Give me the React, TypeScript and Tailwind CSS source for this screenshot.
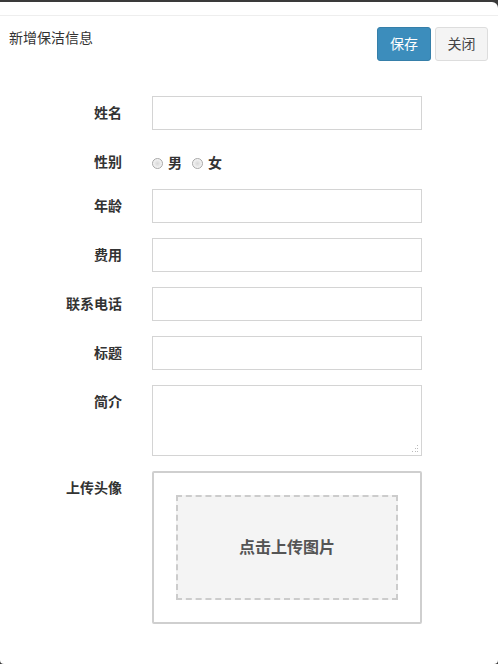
import React from "react"

const font = { fontFamily: '"Liberation Sans", "Noto Sans CJK SC", sans-serif' }

function Field({ label, children, align = "pt-[7px]" }: { label: string; children: React.ReactNode; align?: string }) {
  return (
    <div className="flex">
      <div className={`w-[122px] shrink-0 text-right text-[14px] font-bold text-[#333] ${align}`}>{label}</div>
      <div className="ml-[30px] w-[270px]">{children}</div>
    </div>
  )
}

function TextInput() {
  return <input type="text" className="block h-[34px] w-full border border-[#d4d4d4] bg-white px-3 text-[14px] outline-none" />
}

function Radio({ label }: { label: string }) {
  return (
    <label className="flex items-center gap-[5px]">
      <span className="h-[11px] w-[11px] rounded-full border border-[#a8a8a8] bg-[radial-gradient(circle,#d8d8d8_0%,#f4f4f4_70%)]" />
      <span className="text-[14px] font-bold text-[#333]">{label}</span>
    </label>
  )
}

export default function App() {
  return (
    <div className="h-[664px] w-[498px] bg-[#3a3a3a] pt-[2px]" style={font}>
      <div className="h-[662px] rounded-tr-[6px] rounded-b-[4px] bg-white">
        <div className="h-[14px] border-b border-[#eeeeee]" />

        <div className="flex items-start justify-between pl-[9px] pr-[10px] pt-[11px]">
          <div className="pt-[1px] text-[14px] text-[#333]">新增保洁信息</div>
          <div className="flex gap-[4px]">
            <button className="h-[34px] w-[54px] rounded-[3px] border border-[#367fa9] bg-[#3c8dbc] text-[14px] text-white">保存</button>
            <button className="h-[34px] w-[53px] rounded-[3px] border border-[#dddddd] bg-[#f4f4f4] text-[14px] text-[#444]">关闭</button>
          </div>
        </div>

        <div className="mt-[35px] flex flex-col gap-[15px]">
          <Field label="姓名"><TextInput /></Field>
          <Field label="性别" align="pt-[7px]">
            <div className="flex h-[29px] items-center gap-[10px] pt-[8px]">
              <Radio label="男" />
              <Radio label="女" />
            </div>
          </Field>
          <Field label="年龄"><TextInput /></Field>
          <Field label="费用"><TextInput /></Field>
          <Field label="联系电话"><TextInput /></Field>
          <Field label="标题"><TextInput /></Field>
          <Field label="简介">
            <div className="relative">
              <textarea className="block h-[71px] w-full resize-none border border-[#d4d4d4] bg-white px-3 py-[6px] text-[14px] outline-none" />
              <svg className="absolute bottom-[3px] right-[3px]" width="8" height="8" viewBox="0 0 8 8">
                <rect x="6" y="0" width="1" height="1" fill="#bbb" />
                <rect x="4" y="3" width="1" height="1" fill="#bbb" />
                <rect x="6" y="3" width="1" height="1" fill="#bbb" />
                <rect x="1" y="6" width="1" height="1" fill="#bbb" />
                <rect x="4" y="6" width="1" height="1" fill="#bbb" />
                <rect x="6" y="6" width="1" height="1" fill="#bbb" />
              </svg>
            </div>
          </Field>
          <Field label="上传头像">
            <div className="h-[153px] w-full rounded-[2px] border-2 border-[#cfcfcf] p-[22px]">
              <div className="flex h-[105px] w-full items-center justify-center border-2 border-dashed border-[#cccccc] bg-[#f4f4f4]">
                <span className="text-[16px] font-bold text-[#555]">点击上传图片</span>
              </div>
            </div>
          </Field>
        </div>
      </div>
    </div>
  )
}
